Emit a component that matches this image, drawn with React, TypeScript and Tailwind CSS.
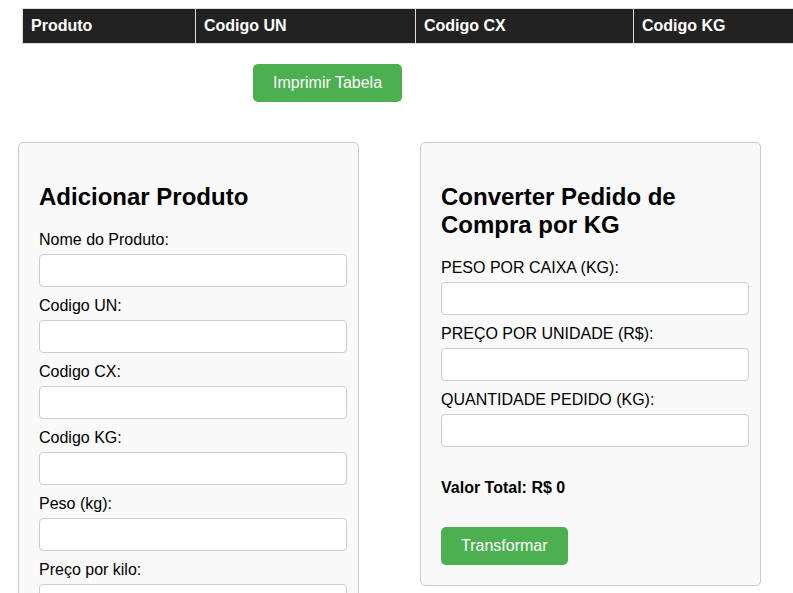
const font = { fontFamily: '"Liberation Sans", Arial, sans-serif' };

const Field = ({ label }: { label: string }) => (
  <>
    <label className="block text-base leading-[18px] mb-[5px] text-black">{label}</label>
    <input
      type="text"
      className="block w-[308px] h-[33px] mb-[10px] bg-white border border-[#ccc] rounded-[4px] px-2 outline-none"
    />
  </>
);

const Card = ({ children }: { children: React.ReactNode }) => (
  <div className="w-[341px] shrink-0 bg-[#f9f9f9] border border-[#ccc] rounded-[5px] px-5 pt-5 pb-5">
    {children}
  </div>
);

const App = () => {
  const columns = [
    { name: "Produto", width: "w-[173px]" },
    { name: "Codigo UN", width: "w-[220px]" },
    { name: "Codigo CX", width: "w-[218px]" },
    { name: "Codigo KG", width: "w-[180px]" },
  ];

  return (
    <div className="h-[593px] w-[793px] overflow-hidden bg-white text-black" style={font}>
      <div className="pl-[22px] pt-2">
        <table className="table-fixed border-collapse w-[791px]">
          <thead>
            <tr>
              {columns.map((c) => (
                <th
                  key={c.name}
                  className={`${c.width} bg-[#222] text-white text-left font-bold text-base leading-[18px] px-2 py-2 border border-[#ddd]`}
                >
                  {c.name}
                </th>
              ))}
            </tr>
          </thead>
          <tbody></tbody>
        </table>
      </div>

      <div className="pl-[253px] mt-[20px]">
        <button className="bg-[#4CAF50] text-white text-base leading-[18px] px-5 py-[10px] rounded-[5px]">
          Imprimir Tabela
        </button>
      </div>

      <div className="flex items-start gap-[61px] pl-[18px] mt-10">
        <Card>
          <h2 className="text-[24px] font-bold leading-[28px] mt-5 mb-5">Adicionar Produto</h2>
          <Field label="Nome do Produto:" />
          <Field label="Codigo UN:" />
          <Field label="Codigo CX:" />
          <Field label="Codigo KG:" />
          <Field label="Peso (kg):" />
          <Field label="Preço por kilo:" />
          <button className="mt-[10px] bg-[#4CAF50] text-white text-base leading-[18px] px-5 py-[10px] rounded-[5px]">
            Adicionar
          </button>
        </Card>

        <Card>
          <h2 className="text-[24px] font-bold leading-[28px] mt-5 mb-5">Converter Pedido de Compra por KG</h2>
          <Field label="PESO POR CAIXA (KG):" />
          <Field label="PREÇO POR UNIDADE (R$):" />
          <Field label="QUANTIDADE PEDIDO (KG):" />
          <p className="font-bold text-base leading-[18px] mt-[32px]">Valor Total: R$ 0</p>
          <button className="mt-[30px] bg-[#4CAF50] text-white text-base leading-[18px] px-5 py-[10px] rounded-[5px]">
            Transformar
          </button>
        </Card>
      </div>
    </div>
  );
};

export default App;
